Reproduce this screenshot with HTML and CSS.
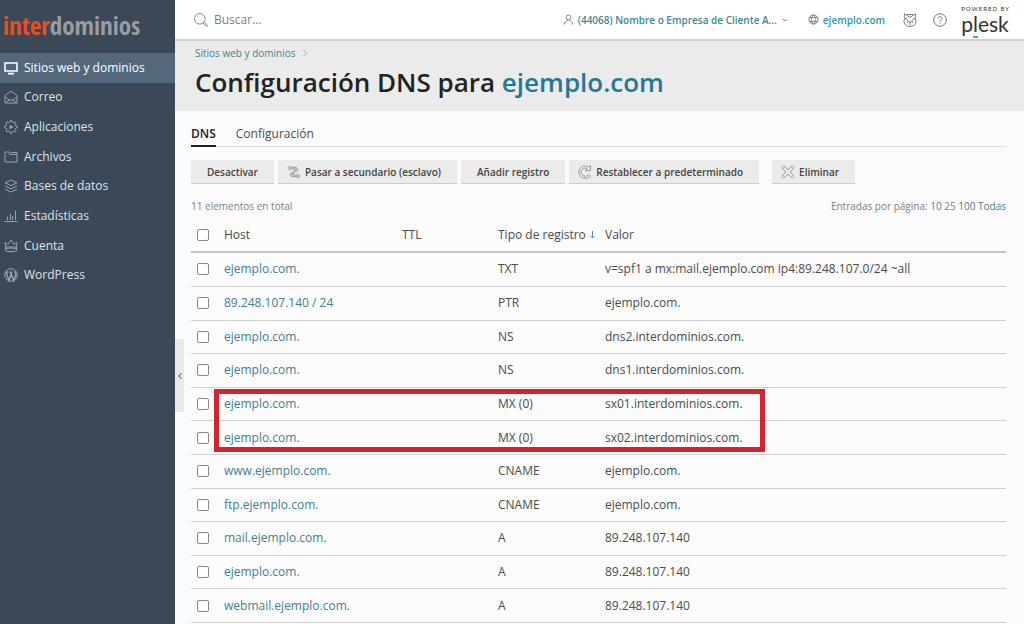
FILE: index.html
```html
<!DOCTYPE html>
<html lang="es">
<head>
<meta charset="utf-8">
<meta name="viewport" content="width=device-width, initial-scale=1">
<title>Configuración DNS para ejemplo.com</title>
<link rel="stylesheet" href="styles.css">
</head>
<body>
<div class="app">
  <aside class="sidebar">
    <a class="brand" href="#"><span class="brand-accent">inter</span>dominios</a>
    <nav>
      <ul class="menu">
        <li><a class="menu-link active" href="#"><svg class="icon" viewBox="1 1 14 14"><path stroke-width="1.6" d="M2 3h12v8H2zM5 13.6h6"/></svg>Sitios web y dominios</a></li>
        <li><a class="menu-link" href="#"><svg class="icon" viewBox="1 1 14 14"><path d="M2 6.500 8 2l6 4.500V14H2zM2 7.500 6 11h4l4-3.500M6 11l-4 3M10 11l4 3"/></svg>Correo</a></li>
        <li><a class="menu-link" href="#"><svg class="icon" viewBox="1 1 14 14"><path d="m6.800 3.200.4-1.700h1.600l.4 1.700 1.200.5 1.500-.9 1.200 1.200-.9 1.500.5 1.200 1.700.4v1.600l-1.700.4-.5 1.200.9 1.500-1.200 1.200-1.500-.9-1.200.5-.4 1.700H7.200l-.4-1.700-1.200-.5-1.500.9-1.200-1.200.9-1.500-.5-1.200-1.700-.4V7.100l1.700-.4.5-1.200-.9-1.500 1.200-1.200 1.500.9z"/><path class="solid" d="m6.500 5.700 4 2.300-4 2.300z"/></svg>Aplicaciones</a></li>
        <li><a class="menu-link" href="#"><svg class="icon" viewBox="1 1 14 14"><path d="M2 13V3h4.500v2.500H14V13zM8 3.500h6v2"/></svg>Archivos</a></li>
        <li><a class="menu-link" href="#"><svg class="icon" viewBox="1 1 14 14"><path d="m8 2 6 2.800-6 2.800-6-2.800zM2 8l6 2.800L14 8M2 11.200 8 14l6-2.800"/></svg>Bases de datos</a></li>
        <li><a class="menu-link" href="#"><svg class="icon" viewBox="1 1 14 14"><path d="M1.500 13.500h13M4.500 12V8.500M7.500 12V6M9.500 12V8M12.500 12V2.500"/></svg>Estadísticas</a></li>
        <li><a class="menu-link" href="#"><svg class="icon" viewBox="1 1 14 14"><path d="M2.500 9 2 4.500l3 2L8 2l3 4.500 3-2-.5 4.500zM2.500 9v3.500c2 1.700 9 1.700 11 0V9M3 10.800c2-1 8-1 10 0"/></svg>Cuenta</a></li>
        <li><a class="menu-link" href="#"><svg class="icon" viewBox="1 1 14 14"><circle cx="8" cy="8" r="6.300"/><path stroke-width="1.500" d="m3 5.500 3 8L8.200 7 7.500 5.300M6.500 5.300h2.800M8.200 7l2.500 6.500 2-5.500c.6-1.800-1-2.300-.8-4M2.500 5.300h2.800"/></svg>WordPress</a></li>
      </ul>
    </nav>
  </aside>

  <div class="page">
    <button class="collapse" type="button" aria-label="Contraer menú"><svg viewBox="0 0 6 8"><path d="M4.500 1 1.500 4l3 3"/></svg></button>
    <header class="topbar">
      <form class="search">
        <label class="search-label" for="q"><svg class="icon" viewBox="1 1 14 14" role="img" aria-label="Buscar"><circle cx="6.800" cy="6.800" r="5.300"/><path d="m10.700 10.700.8-.2 3.300 3.200-1 1-3.300-3.300z"/></svg></label>
        <input class="search-input" id="q" type="search" placeholder="Buscar...">
      </form>
      <div class="account">
        <button class="account-button" type="button"><svg class="icon small" viewBox="0 0 12 12"><circle cx="6" cy="3.800" r="2.600"/><path d="M1.500 11.500V9.600l2.300-1.800 1.400-1.100M10.500 11.500V9.600L8.200 7.800 6.800 6.700"/></svg>(44068) Nombre o Empresa de Cliente A...<svg class="chevron" viewBox="0 0 8 8"><path d="M2 3l2 2 2-2"/></svg></button>
        <a class="domain" href="#"><svg class="icon small" viewBox="0 0 12 12"><circle cx="6" cy="6" r="5"/><path d="M1.500 4h9M1.500 8h9M6 1C3 3.500 3 8.500 6 11M6 1c3 2.500 3 7.500 0 10"/></svg>ejemplo.com</a>
        <button class="round" type="button" aria-label="Asistente"><svg class="icon" viewBox="1 1 14 14"><path d="M4.500 3 2.500 1.800 2.200 4.500l.8 1.300C1 9 2 13 5.500 14c1.500.5 3.500.5 5 0 3.500-1 4.500-5 2.500-8.200l.8-1.300-.3-2.700L11.500 3c-2-.8-5-.8-7 0zM4.500 3 8 5.500 11.500 3M3 6l3.500 3L5 11M13 6 9.500 9l1.500 2M8 11v2"/><path class="solid" d="M6.500 9.500h3L8 11.500z"/></svg></button>
        <button class="round" type="button" aria-label="Ayuda"><svg class="icon" viewBox="1 1 14 14"><circle cx="8" cy="8" r="6.300"/><path d="M6 6.500c0-2.600 4-2.600 4 0C10 8 8 8 8 9.700M8 11v1"/></svg></button>
        <a class="plesk" href="#"><span class="powered">POWERED BY</span><span class="plesk-name">p<span class="plesk-mark">l</span>esk</span></a>
      </div>
    </header>

    <div class="heading">
      <nav class="crumbs"><a href="#">Sitios web y dominios</a><svg class="crumb-arrow" viewBox="0 0 6 8"><path d="m1.500 1 3 3-3 3"/></svg></nav>
      <h1 class="title">Configuración DNS para <a href="#">ejemplo.com</a></h1>
    </div>

    <main class="content">
      <nav class="tabs">
        <a class="tab current" href="#">DNS</a>
        <a class="tab" href="#">Configuración</a>
      </nav>
      <div class="toolbar">
        <button class="btn" type="button">Desactivar</button>
        <button class="btn with-icon" type="button"><svg class="icon" viewBox="1 1 14 14"><path d="M1.800 4 4 1.800v1.500h5c3.500 0 3.500 4.200.5 4.200H8V6h1.500c1 0 1-1.200 0-1.200H4v1.400zM14.200 12 12 14.200v-1.500H7c-3.500 0-3.500-4.200-.5-4.200H8V10H6.500c-1 0-1 1.200 0 1.200H12V9.800z"/></svg>Pasar a secundario (esclavo)</button>
        <button class="btn" type="button">Añadir registro</button>
        <button class="btn with-icon" type="button"><svg class="icon" viewBox="1 1 14 14"><path d="M13.500 1.500v5.200H8.300l2-2C7.500 3 4 5 4 8.200c0 4 5.200 5.500 7.500 2.300l2 1.300C10 16.500 1.700 14.500 1.700 8.200c0-5.200 6-8 10-5z"/></svg>Restablecer a predeterminado</button>
        <button class="btn with-icon separate" type="button"><svg class="icon" viewBox="1 1 14 14"><path d="m3.500 1.700 4.500 4 4.500-4 1.800 1.800-4 4.500 4 4.500-1.800 1.800-4.500-4-4.500 4-1.800-1.800 4-4.500-4-4.500z"/></svg>Eliminar</button>
      </div>
      <div class="list-info">
        <span>11 elementos en total</span>
        <span>Entradas por página: <a href="#">10</a> 25 <a href="#">100</a> <a href="#">Todas</a></span>
      </div>
      <div class="records-wrap">
        <table class="records">
          <colgroup><col class="c-check"><col class="c-host"><col class="c-ttl"><col class="c-type"><col></colgroup>
          <thead>
            <tr><th><input type="checkbox" aria-label="Seleccionar todo"></th><th>Host</th><th>TTL</th><th>Tipo de registro <svg class="sort" viewBox="0 0 8 10"><path d="M4 1v8M1.500 6.500 4 9l2.500-2.500"/></svg></th><th>Valor</th></tr>
          </thead>
          <tbody>
            <tr><td><input type="checkbox" aria-label="ejemplo.com. TXT"></td><td><a href="#">ejemplo.com.</a></td><td></td><td>TXT</td><td>v=spf1 a mx:mail.ejemplo.com ip4:89.248.107.0/24 ~all</td></tr>
            <tr><td><input type="checkbox" aria-label="89.248.107.140 / 24 PTR"></td><td><a href="#">89.248.107.140 / 24</a></td><td></td><td>PTR</td><td>ejemplo.com.</td></tr>
            <tr><td><input type="checkbox" aria-label="ejemplo.com. NS dns2"></td><td><a href="#">ejemplo.com.</a></td><td></td><td>NS</td><td>dns2.interdominios.com.</td></tr>
            <tr><td><input type="checkbox" aria-label="ejemplo.com. NS dns1"></td><td><a href="#">ejemplo.com.</a></td><td></td><td>NS</td><td>dns1.interdominios.com.</td></tr>
            <tr><td><input type="checkbox" aria-label="ejemplo.com. MX sx01"></td><td><a href="#">ejemplo.com.</a></td><td></td><td>MX (0)</td><td>sx01.interdominios.com.</td></tr>
            <tr><td><input type="checkbox" aria-label="ejemplo.com. MX sx02"></td><td><a href="#">ejemplo.com.</a></td><td></td><td>MX (0)</td><td>sx02.interdominios.com.</td></tr>
            <tr><td><input type="checkbox" aria-label="www.ejemplo.com. CNAME"></td><td><a href="#">www.ejemplo.com.</a></td><td></td><td>CNAME</td><td>ejemplo.com.</td></tr>
            <tr><td><input type="checkbox" aria-label="ftp.ejemplo.com. CNAME"></td><td><a href="#">ftp.ejemplo.com.</a></td><td></td><td>CNAME</td><td>ejemplo.com.</td></tr>
            <tr><td><input type="checkbox" aria-label="mail.ejemplo.com. A"></td><td><a href="#">mail.ejemplo.com.</a></td><td></td><td>A</td><td>89.248.107.140</td></tr>
            <tr><td><input type="checkbox" aria-label="ejemplo.com. A"></td><td><a href="#">ejemplo.com.</a></td><td></td><td>A</td><td>89.248.107.140</td></tr>
            <tr><td><input type="checkbox" aria-label="webmail.ejemplo.com. A"></td><td><a href="#">webmail.ejemplo.com.</a></td><td></td><td>A</td><td>89.248.107.140</td></tr>
          </tbody>
        </table>
        <div class="highlight"></div>
      </div>
    </main>
  </div>
</div>
</body>
</html>
```
FILE: styles.css
```css
* { box-sizing: border-box; }

body {
  margin: 0;
  background: #fbfbfb;
  color: #4c4c4c;
  font: 12px/18px "Open Sans", "Noto Sans", sans-serif;
}

a { color: #45808f; text-decoration: none; }
button { font: inherit; border: 0; cursor: pointer; }
svg { fill: none; stroke: currentColor; flex: none; }

.icon { width: 14px; height: 14px; }
.icon.small { width: 11px; height: 11px; color: #777; }
.solid { fill: currentColor; stroke: none; }

.app { display: flex; min-height: 100vh; }

/* Sidebar */
.sidebar { flex: none; width: 175px; background: #3a4858; }
.brand {
  display: flex;
  align-items: center;
  height: 53px;
  padding: 0 0 4px 3px;
  color: #999da3;
  font: bold 25px/32px "Liberation Sans Narrow", "Open Sans Condensed", "Roboto Condensed", "Open Sans", sans-serif;
}
.brand-accent { color: #e8501f; }
.menu {
  display: grid;
  grid-auto-rows: 1fr;
  height: 237px;
  margin: 0;
  padding: 0;
  list-style: none;
}
.menu-link {
  display: flex;
  align-items: center;
  gap: 6px;
  height: 100%;
  padding-left: 4px;
  color: #dfe4e9;
  font-weight: 500;
}
.menu-link .icon { color: #97a3af; }
.menu-link.active { background: #53697b; color: #fff; }
.menu-link.active .icon { color: #fff; }

/* Top bar */
.page { position: relative; flex: 1; min-width: 0; }
.collapse {
  position: absolute;
  left: 0;
  top: 339px;
  width: 9px;
  height: 73px;
  padding: 0 0 0 2px;
  background: #e9e9e9;
  color: #444;
}
.collapse svg { display: block; width: 6px; height: 8px; }
.topbar {
  display: flex;
  align-items: center;
  justify-content: space-between;
  height: 41px;
  padding: 0 14px 0 19px;
  background: #fff;
  border-bottom: 2px solid #d0d0d0;
}
.search { display: flex; align-items: center; gap: 6px; }
.search-label { display: flex; color: #8a8a8a; }
.search-input {
  width: 160px;
  padding: 0;
  border: 0;
  outline: 0;
  background: none;
  color: #555;
  font: inherit;
}
.search-input::placeholder { color: #7d7d7d; opacity: 1; }
.account { display: flex; align-items: center; font-size: 10px; font-weight: 600; }
.account-button { display: flex; align-items: center; gap: 4px; padding: 0; background: none; color: #3f8794; }
.chevron { width: 8px; height: 8px; color: #888; }
.domain { display: flex; align-items: center; gap: 4px; margin-left: 19px; color: #3695ae; }
.round { display: flex; margin-left: 16px; padding: 0; background: none; color: #777; }
.domain + .round { margin-left: 18px; }
.plesk { display: flex; flex-direction: column; margin-left: 14px; color: #333; }
.powered { font: 6px/8px Lato, sans-serif; letter-spacing: 1px; }
.plesk-name { font: 21px/22px Lato, sans-serif; }
.plesk-mark { border-bottom: 2px solid #35b5bd; }

/* Page heading */
.heading { padding: 3px 20px 12px; background: #ebebeb; }
.crumbs { display: flex; align-items: center; gap: 6px; font-size: 10px; }
.crumb-arrow { width: 6px; height: 8px; color: #aaa; }
.title { margin: 3px 0 0; color: #222; font-size: 26px; line-height: 34px; font-weight: 600; }
.title a { color: #23789a; }

/* Content */
.content { padding: 11px 18px 0 16px; }
.tabs { display: flex; gap: 20px; border-bottom: 1px solid #ddd; }
.tab { margin-bottom: -1px; padding: 3px 0 2px; color: #4c4c4c; border-bottom: 2px solid transparent; font-weight: 500; }
.tab.current { color: #222; border-color: #222; font-weight: 600; }
.toolbar { display: flex; gap: 4px; margin-top: 13px; }
.btn {
  display: flex;
  align-items: center;
  height: 24px;
  padding: 0 16px;
  background: #ebebeb;
  border-bottom: 1px solid #ccc;
  color: #444;
  font-size: 10px;
  font-weight: 600;
}
.with-icon { gap: 4px; padding-left: 9px; }
.with-icon .icon { color: #999; }
.separate { margin-left: 9px; }
.list-info {
  display: flex;
  justify-content: space-between;
  margin-top: 13px;
  color: #808080;
  font-size: 10px;
}

/* Records */
.records-wrap { position: relative; margin-top: 3px; }
.records { width: 100%; height: 405px; table-layout: fixed; border-collapse: collapse; }
.records thead th { height: 34px; }
.records th, .records td {
  padding: 0;
  border-bottom: 1px solid #d0d0d0;
  text-align: left;
  font-weight: 400;
  white-space: nowrap;
}
.records th { border-bottom: 2px solid #c6c6c6; }
.records input {
  appearance: none;
  display: block;
  width: 12px;
  height: 12px;
  margin: 0 0 0 6px;
  background: #fff;
  border: 1px solid #888;
  border-radius: 2px;
}
.c-check { width: 33px; }
.c-host { width: 178px; }
.c-ttl { width: 96px; }
.c-type { width: 107px; }
.sort { width: 7px; height: 9px; color: #3a87a0; }
.highlight {
  position: absolute;
  left: 23px;
  top: 171px;
  width: 551px;
  height: 63px;
  border: 5px solid #d2232e;
  pointer-events: none;
}
```
